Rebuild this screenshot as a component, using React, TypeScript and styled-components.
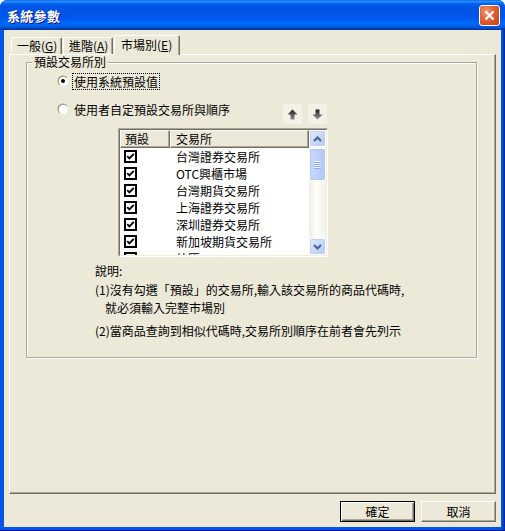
import React from "react";
import styled, { createGlobalStyle } from "styled-components";

const Global = createGlobalStyle`
  html, body { margin: 0; padding: 0; background: #ffffff; }
  body { font-family: "Noto Sans CJK TC", "Liberation Sans", sans-serif; font-size: 12px; color: #000; }
  * { box-sizing: border-box; }
`;

const FONT = `"Noto Sans CJK TC", "Liberation Sans", sans-serif`;

const Window = styled.div`
  width: 505px;
  height: 531px;
  display: flex;
  flex-direction: column;
  border-radius: 7px 7px 0 0;
  overflow: hidden;
  background: #0055ea;
`;

const TitleBar = styled.div`
  height: 30px;
  flex: none;
  display: flex;
  align-items: center;
  justify-content: space-between;
  padding: 0 5px 0 7px;
  background: linear-gradient(
    to bottom,
    #0058ee 0%,
    #3593ff 4%,
    #288eff 6%,
    #127dff 8%,
    #036ffc 10%,
    #0262ee 14%,
    #0057e5 20%,
    #0054e3 24%,
    #0055eb 56%,
    #005bf5 66%,
    #026afe 76%,
    #0062ef 86%,
    #0052d6 92%,
    #0040ab 96%,
    #003092 100%
  );
`;

const Title = styled.span`
  color: #fff;
  font-family: ${FONT};
  font-weight: 700;
  font-size: 13px;
  letter-spacing: 0.3px;
  text-shadow: 1px 1px #0f1089;
`;

const CloseBtn = styled.div`
  width: 21px;
  height: 21px;
  border: 1px solid #fff;
  border-radius: 3px;
  background: radial-gradient(circle at 35% 30%, #f29a78 0%, #e0602f 45%, #c5411a 100%);
  display: flex;
  align-items: center;
  justify-content: center;
`;

const Frame = styled.div`
  flex: 1;
  display: flex;
  padding: 0 4px 4px 4px;
  background: linear-gradient(to right, #0043c9 0, #0a5cf0 1px, #0055ea 3px, #0055ea calc(100% - 3px), #0035b5 calc(100% - 1px), #001ea0 100%);
  box-shadow: inset 0 -1px #00138c;
`;

const Body = styled.div`
  flex: 1;
  display: flex;
  flex-direction: column;
  background: #ece9d8;
  padding: 5px 5px 0 5px;
`;

const TabStrip = styled.div`
  height: 19px;
  display: flex;
  align-items: flex-end;
  gap: 1px;
  padding-left: 2px;
  position: relative;
  z-index: 1;
`;

const Tab = styled.div<{ $active?: boolean; $w: number }>`
  width: ${(p) => p.$w}px;
  height: ${(p) => (p.$active ? 20 : 17)}px;
  margin-bottom: ${(p) => (p.$active ? -1 : 0)}px;
  background: #ece9d8;
  border-top: 1px solid #fff;
  border-left: 1px solid #fff;
  border-right: 1px solid #716f64;
  box-shadow: inset -1px 0 #aca899;
  border-radius: 2px 2px 0 0;
  padding-left: ${(p) => (p.$active ? 6 : 5)}px;
  font-family: ${FONT};
  font-size: 12px;
  line-height: ${(p) => (p.$active ? 18 : 16)}px;
  white-space: nowrap;
`;

const Panel = styled.div`
  height: 440px;
  flex: none;
  border-top: 1px solid #fff;
  border-left: 1px solid #fff;
  border-right: 1px solid #716f64;
  border-bottom: 1px solid #716f64;
  box-shadow: inset -1px -1px #aca899;
  padding: 7px 0 0 16px;
`;

const GroupBox = styled.div`
  position: relative;
  width: 451px;
  height: 296px;
  border: 1px solid #aca899;
  box-shadow: inset 1px 1px #fff, 1px 1px #fff;
  padding: 10px 0 0 30px;
  display: flex;
  flex-direction: column;
`;

const Legend = styled.span`
  position: absolute;
  top: -8px;
  left: 5px;
  padding: 0 2px;
  background: #ece9d8;
  line-height: 14px;
  font-family: ${FONT};
  font-size: 12px;
`;

const RadioRow = styled.div`
  display: flex;
  align-items: center;
  height: 16px;
  gap: 3px;
`;

const RadioLabel = styled.span<{ $focus?: boolean }>`
  border: 1px dotted ${(p) => (p.$focus ? "#000" : "transparent")};
  padding: 0 1px;
  line-height: 15px;
  font-family: ${FONT};
  font-size: 12px;
  white-space: nowrap;
`;

const OrderRow = styled.div`
  width: 270px;
  height: 23px;
  margin-top: 12px;
  display: flex;
  justify-content: space-between;
  align-items: flex-start;
`;

const MoveGroup = styled.div`
  display: flex;
  gap: 6px;
  margin-top: 3px;
`;

const MoveBtn = styled.div`
  width: 19px;
  height: 20px;
  background: #f4f2e8;
  display: flex;
  align-items: center;
  justify-content: center;
`;

const ListFrame = styled.div`
  width: 210px;
  height: 129px;
  margin: 4px 0 0 61px;
  border: 1px solid;
  border-color: #aca899 #fff #fff #aca899;
`;

const ListInner = styled.div`
  width: 100%;
  height: 100%;
  border: 1px solid;
  border-color: #716f64 #f1efe2 #f1efe2 #716f64;
  background: #fff;
  display: flex;
  overflow: hidden;
`;

const ListMain = styled.div`
  flex: 1;
  display: flex;
  flex-direction: column;
  overflow: hidden;
`;

const HeaderRow = styled.div`
  display: flex;
  height: 18px;
  flex: none;
`;

const HeaderCell = styled.div<{ $w?: number }>`
  ${(p) => (p.$w ? `width: ${p.$w}px;` : "flex: 1;")}
  height: 18px;
  background: #ece9d8;
  border-top: 1px solid #fff;
  border-left: 1px solid #fff;
  border-right: 1px solid #716f64;
  border-bottom: 1px solid #716f64;
  box-shadow: inset -1px -1px #aca899;
  padding-left: ${(p) => (p.$w ? 4 : 5)}px;
  line-height: 15px;
  font-family: ${FONT};
  font-size: 12px;
`;

const Row = styled.div`
  display: flex;
  align-items: center;
  height: 17px;
  flex: none;
`;

const CheckCell = styled.div`
  width: 50px;
  padding-left: 4px;
  display: flex;
  align-items: center;
`;

const CheckBox = styled.div`
  width: 13px;
  height: 13px;
  border: 2px solid #000;
  background: #fff;
  display: flex;
  align-items: center;
  justify-content: center;
`;

const NameCell = styled.div`
  padding-left: 6px;
  font-family: ${FONT};
  font-size: 12px;
  line-height: 17px;
  white-space: nowrap;
`;

const ScrollBar = styled.div`
  width: 17px;
  flex: none;
  display: flex;
  flex-direction: column;
  background: linear-gradient(to right, #eeede5, #fdfdfa 40%, #f3f1ec);
`;

const ScrollBtn = styled.div`
  width: 17px;
  height: 17px;
  flex: none;
  border: 1px solid #fff;
  border-radius: 2px;
  background: linear-gradient(135deg, #e6eefc 0%, #c9d8fb 50%, #b6cbf7 100%);
  box-shadow: inset 0 0 0 1px #bfd0f7;
  display: flex;
  align-items: center;
  justify-content: center;
`;

const Track = styled.div`
  flex: 1;
  padding-top: 1px;
`;

const Thumb = styled.div`
  width: 17px;
  height: 33px;
  border: 1px solid #fff;
  border-radius: 2px;
  background: linear-gradient(to right, #c9d8fc 0%, #bdd0fb 50%, #b0c6f6 100%);
  box-shadow: inset 0 0 0 1px #b4c8f6;
  display: flex;
  flex-direction: column;
  align-items: center;
  justify-content: center;
  gap: 1px;
`;

const Grip = styled.div`
  width: 7px;
  height: 1px;
  background: #eef3fe;
  box-shadow: 0 1px #8caef0;
`;

const Notes = styled.div`
  margin-left: 38px;
  display: flex;
  flex-direction: column;
`;

const NoteLine = styled.div<{ $mt: number; $indent?: number }>`
  margin-top: ${(p) => p.$mt}px;
  padding-left: ${(p) => p.$indent ?? 0}px;
  line-height: 18px;
  font-family: ${FONT};
  font-size: 12px;
  white-space: nowrap;
`;

const ButtonBar = styled.div`
  display: flex;
  justify-content: flex-end;
  gap: 6px;
  margin-top: 7px;
`;

const Button = styled.div<{ $default?: boolean }>`
  width: 75px;
  height: 21px;
  background: #ece9d8;
  border: 1px solid;
  border-color: ${(p) => (p.$default ? "#000" : "#fff #716f64 #716f64 #fff")};
  box-shadow: ${(p) =>
    p.$default
      ? "inset 1px 1px #fff, inset -1px -1px #716f64, inset -2px -2px #aca899"
      : "inset -1px -1px #aca899"};
  display: flex;
  align-items: center;
  justify-content: center;
  font-family: ${FONT};
  font-size: 12px;
`;

const Radio: React.FC<{ checked?: boolean; id: string }> = ({ checked, id }) => (
  <svg width="12" height="12" viewBox="0 0 12 12">
    <defs>
      <linearGradient id={id} x1="0" y1="0" x2="1" y2="1">
        <stop offset="0" stopColor="#7f7d72" />
        <stop offset="0.5" stopColor="#aca899" />
        <stop offset="0.55" stopColor="#f1efe2" />
        <stop offset="1" stopColor="#ffffff" />
      </linearGradient>
    </defs>
    <circle cx="6" cy="6" r="5.5" fill={`url(#${id})`} />
    <circle cx="6" cy="6" r="4.3" fill="#fff" />
    {checked && <circle cx="6" cy="6" r="2" fill="#000" />}
  </svg>
);

const Check = () => (
  <svg width="9" height="9" viewBox="0 0 9 9">
    <polyline points="1.2,4.2 3.4,6.4 7.8,1.8" fill="none" stroke="#000" strokeWidth="1.9" />
  </svg>
);

const ArrowIcon: React.FC<{ down?: boolean }> = ({ down }) => (
  <svg width="11" height="11" viewBox="0 0 11 11" style={down ? { transform: "rotate(180deg)" } : undefined}>
    <defs>
      <linearGradient id={down ? "ad" : "au"} x1="0" y1="0" x2="0" y2="1">
        <stop offset="0" stopColor={down ? "#9a9a9a" : "#1e1e1e"} />
        <stop offset="1" stopColor={down ? "#1e1e1e" : "#8a8a8a"} />
      </linearGradient>
    </defs>
    <polygon points="5.5,0.5 10.5,5.5 7.5,5.5 7.5,10.5 3.5,10.5 3.5,5.5 0.5,5.5" fill={`url(#${down ? "ad" : "au"})`} />
  </svg>
);

const Chevron: React.FC<{ down?: boolean }> = ({ down }) => (
  <svg width="9" height="6" viewBox="0 0 9 6">
    <polyline
      points={down ? "1,1 4.5,4.5 8,1" : "1,5 4.5,1.5 8,5"}
      fill="none"
      stroke="#4d6185"
      strokeWidth="2"
    />
  </svg>
);

const exchanges = [
  "台灣證券交易所",
  "OTC興櫃市場",
  "台灣期貨交易所",
  "上海證券交易所",
  "深圳證券交易所",
  "新加坡期貨交易所",
  "外匯",
];

export default function App() {
  return (
    <>
      <Global />
      <Window>
        <TitleBar>
          <Title>系統參數</Title>
          <CloseBtn>
            <svg width="11" height="11" viewBox="0 0 11 11">
              <path d="M1.5 1.5 L9.5 9.5 M9.5 1.5 L1.5 9.5" stroke="#fff" strokeWidth="2.2" />
            </svg>
          </CloseBtn>
        </TitleBar>
        <Frame>
          <Body>
            <TabStrip>
              <Tab $w={51}>
                一般(<u>G</u>)
              </Tab>
              <Tab $w={50}>
                進階(<u>A</u>)
              </Tab>
              <Tab $w={66} $active>
                市場別(<u>E</u>)
              </Tab>
            </TabStrip>
            <Panel>
              <GroupBox>
                <Legend>預設交易所別</Legend>
                <RadioRow>
                  <Radio checked id="r1" />
                  <RadioLabel $focus>使用系統預設值</RadioLabel>
                </RadioRow>
                <OrderRow>
                  <RadioRow>
                    <Radio id="r2" />
                    <RadioLabel>使用者自定預設交易所與順序</RadioLabel>
                  </RadioRow>
                  <MoveGroup>
                    <MoveBtn>
                      <ArrowIcon />
                    </MoveBtn>
                    <MoveBtn>
                      <ArrowIcon down />
                    </MoveBtn>
                  </MoveGroup>
                </OrderRow>
                <ListFrame>
                  <ListInner>
                    <ListMain>
                      <HeaderRow>
                        <HeaderCell $w={50}>預設</HeaderCell>
                        <HeaderCell>交易所</HeaderCell>
                      </HeaderRow>
                      {exchanges.map((name) => (
                        <Row key={name}>
                          <CheckCell>
                            <CheckBox>
                              <Check />
                            </CheckBox>
                          </CheckCell>
                          <NameCell>{name}</NameCell>
                        </Row>
                      ))}
                    </ListMain>
                    <ScrollBar>
                      <ScrollBtn>
                        <Chevron />
                      </ScrollBtn>
                      <Track>
                        <Thumb>
                          <Grip />
                          <Grip />
                          <Grip />
                          <Grip />
                        </Thumb>
                      </Track>
                      <ScrollBtn>
                        <Chevron down />
                      </ScrollBtn>
                    </ScrollBar>
                  </ListInner>
                </ListFrame>
                <Notes>
                  <NoteLine $mt={5}>說明:</NoteLine>
                  <NoteLine $mt={1}>(1)沒有勾選「預設」的交易所,輸入該交易所的商品代碼時,</NoteLine>
                  <NoteLine $mt={0} $indent={10}>就必須輸入完整市場別</NoteLine>
                  <NoteLine $mt={5}>(2)當商品查詢到相似代碼時,交易所別順序在前者會先列示</NoteLine>
                </Notes>
              </GroupBox>
            </Panel>
            <ButtonBar>
              <Button $default>確定</Button>
              <Button>取消</Button>
            </ButtonBar>
          </Body>
        </Frame>
      </Window>
    </>
  );
}
